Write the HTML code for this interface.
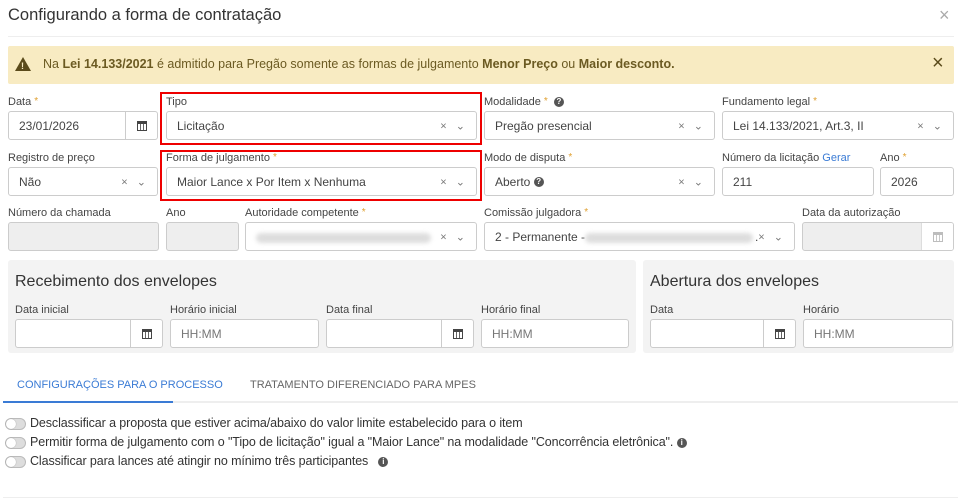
<!DOCTYPE html>
<html><head><meta charset="utf-8"><style>
*{box-sizing:border-box;margin:0;padding:0}
body{width:962px;height:501px;background:#fff;font-family:"Liberation Sans",sans-serif;color:#333;position:relative;overflow:hidden}
.a{position:absolute}
.lbl{position:absolute;font-size:11px;color:#444;white-space:nowrap}
.st{color:#e0a030;font-size:10px;vertical-align:top;margin-left:3px}
.in{position:absolute;border:1px solid #ccc;border-radius:3px;background:#fff;font-size:12px;color:#444;padding-left:10px;display:flex;align-items:center;white-space:nowrap;overflow:hidden}
.g{background:#eee}
.xv{position:absolute;right:8px;top:50%;transform:translateY(-50%);font-size:11px;color:#777;letter-spacing:3px}
.cal{position:absolute;right:0;top:0;bottom:0;width:32px;border-left:1px solid #ccc;display:flex;align-items:center;justify-content:center}
.ci{width:10px;height:10px;border:1.5px solid #444;border-top-width:3px;background:repeating-linear-gradient(90deg,#fff 0 2px,#666 2px 3px)}
.red{position:absolute;border:2px solid #e00}
.blur{position:absolute;height:10px;background:#ddd;border-radius:5px;filter:blur(2px)}
.tg{position:absolute;left:5px;width:21px;height:12px;border-radius:6px;background:#ddd;border:1px solid #bbb}
.tg:after{content:"";position:absolute;left:0;top:0;width:10px;height:10px;border-radius:50%;background:#fff;box-shadow:0 0 1px #888}
.tt{position:absolute;left:30px;font-size:12.5px;color:#333;white-space:nowrap;letter-spacing:-0.1px}
.info{display:inline-block;width:10px;height:10px;border-radius:50%;background:#555;color:#fff;font-size:8px;text-align:center;line-height:10px;font-weight:bold;vertical-align:middle}
</style></head><body>
<div class="a" style="left:8px;top:6px;font-size:16.5px;color:#333">Configurando a forma de contratação</div>
<div class="a" style="left:939px;top:5px;font-size:18px;color:#aaa">×</div>
<div class="a" style="left:8px;top:36px;width:946px;height:1px;background:#eee"></div>
<div class="a" style="left:8px;top:46px;width:946px;height:38px;background:#f8ebc2;border-radius:2px"></div>
<div class="a" style="left:15px;top:57px;width:0;height:0;border-left:8px solid transparent;border-right:8px solid transparent;border-bottom:14px solid #5a4a1a"></div>
<div class="a" style="left:21px;top:61px;font-size:9px;color:#f8ebc2;font-weight:bold">!</div>
<div class="a" style="left:43px;top:57px;font-size:12.5px;color:#6b5a22">Na <b>Lei 14.133/2021</b> é admitido para Pregão somente as formas de julgamento <b>Menor Preço</b> ou <b>Maior desconto.</b></div>
<div class="a" style="left:932px;top:52px;font-size:20px;color:#5a4a1a">×</div>

<div class="lbl" style="left:8px;top:96px">Data<span class="st">*</span></div>
<div class="in" style="left:8px;top:111px;width:150px;height:29px">23/01/2026<div class="cal"><div class="ci"></div></div></div>
<div class="red" style="left:160px;top:92px;width:322px;height:53px"></div>
<div class="lbl" style="left:166px;top:96px">Tipo</div>
<div class="in" style="left:166px;top:111px;width:311px;height:29px">Licitação<span class="xv">× ⌄</span></div>
<div class="lbl" style="left:484px;top:96px">Modalidade<span class="st">*</span> &nbsp;<span class="info">?</span></div>
<div class="in" style="left:484px;top:111px;width:231px;height:29px">Pregão presencial<span class="xv">× ⌄</span></div>
<div class="lbl" style="left:722px;top:96px">Fundamento legal<span class="st">*</span></div>
<div class="in" style="left:722px;top:111px;width:232px;height:29px">Lei 14.133/2021, Art.3, II<span class="xv">× ⌄</span></div>

<div class="lbl" style="left:8px;top:152px">Registro de preço</div>
<div class="in" style="left:8px;top:167px;width:150px;height:29px">Não<span class="xv">× ⌄</span></div>
<div class="red" style="left:160px;top:150px;width:322px;height:51px"></div>
<div class="lbl" style="left:166px;top:152px">Forma de julgamento<span class="st">*</span></div>
<div class="in" style="left:166px;top:167px;width:311px;height:29px">Maior Lance x Por Item x Nenhuma<span class="xv">× ⌄</span></div>
<div class="lbl" style="left:484px;top:152px">Modo de disputa<span class="st">*</span></div>
<div class="in" style="left:484px;top:167px;width:231px;height:29px">Aberto&nbsp;<span class="info">?</span><span class="xv">× ⌄</span></div>
<div class="lbl" style="left:722px;top:152px">Número da licitação <span style="color:#3a7bd5">Gerar</span></div>
<div class="lbl" style="left:880px;top:152px">Ano<span class="st">*</span></div>
<div class="in" style="left:722px;top:167px;width:152px;height:29px">211</div>
<div class="in" style="left:880px;top:167px;width:74px;height:29px">2026</div>

<div class="lbl" style="left:8px;top:207px">Número da chamada</div>
<div class="in g" style="left:8px;top:222px;width:151px;height:29px"></div>
<div class="lbl" style="left:166px;top:207px">Ano</div>
<div class="in g" style="left:166px;top:222px;width:73px;height:29px"></div>
<div class="lbl" style="left:245px;top:207px">Autoridade competente<span class="st">*</span></div>
<div class="in" style="left:245px;top:222px;width:232px;height:29px"><div class="blur" style="left:10px;top:10px;width:175px"></div><span class="xv">× ⌄</span></div>
<div class="lbl" style="left:484px;top:207px">Comissão julgadora<span class="st">*</span></div>
<div class="in" style="left:484px;top:222px;width:311px;height:29px">2 - Permanente -<div class="blur" style="left:100px;top:10px;width:168px"></div><span style="position:absolute;left:270px">.</span><span class="xv">× ⌄</span></div>
<div class="lbl" style="left:802px;top:207px">Data da autorização</div>
<div class="in g" style="left:802px;top:222px;width:152px;height:29px"><div class="cal" style="background:#fff;border-left-color:#ddd"><div class="ci" style="opacity:.35"></div></div></div>

<div class="a" style="left:8px;top:260px;width:628px;height:93px;background:#f3f3f3;border-radius:3px"></div>
<div class="a" style="left:15px;top:273px;font-size:16px;color:#333">Recebimento dos envelopes</div>
<div class="lbl" style="left:15px;top:304px">Data inicial</div>
<div class="lbl" style="left:170px;top:304px">Horário inicial</div>
<div class="lbl" style="left:326px;top:304px">Data final</div>
<div class="lbl" style="left:481px;top:304px">Horário final</div>
<div class="in" style="left:15px;top:319px;width:148px;height:29px"><div class="cal"><div class="ci"></div></div></div>
<div class="in" style="left:170px;top:319px;width:149px;height:29px;color:#777">HH:MM</div>
<div class="in" style="left:326px;top:319px;width:148px;height:29px"><div class="cal"><div class="ci"></div></div></div>
<div class="in" style="left:481px;top:319px;width:148px;height:29px;color:#777">HH:MM</div>

<div class="a" style="left:643px;top:260px;width:311px;height:93px;background:#f3f3f3;border-radius:3px"></div>
<div class="a" style="left:650px;top:273px;font-size:16px;color:#333">Abertura dos envelopes</div>
<div class="lbl" style="left:650px;top:304px">Data</div>
<div class="lbl" style="left:803px;top:304px">Horário</div>
<div class="in" style="left:650px;top:319px;width:146px;height:29px"><div class="cal"><div class="ci"></div></div></div>
<div class="in" style="left:803px;top:319px;width:150px;height:29px;color:#777">HH:MM</div>

<div class="a" style="left:17px;top:379px;font-size:11px;color:#3a7bd5">CONFIGURAÇÕES PARA O PROCESSO</div>
<div class="a" style="left:250px;top:379px;font-size:11px;color:#666">TRATAMENTO DIFERENCIADO PARA MPES</div>
<div class="a" style="left:3px;top:401px;width:955px;height:2px;background:#eee"></div>
<div class="a" style="left:3px;top:401px;width:170px;height:2px;background:#3a7bd5"></div>

<div class="tg" style="top:418px"></div><div class="tt" style="top:416px">Desclassificar a proposta que estiver acima/abaixo do valor limite estabelecido para o item</div>
<div class="tg" style="top:437px"></div><div class="tt" style="top:435px">Permitir forma de julgamento com o "Tipo de licitação" igual a "Maior Lance" na modalidade "Concorrência eletrônica". <span class="info">i</span></div>
<div class="tg" style="top:456px"></div><div class="tt" style="top:454px">Classificar para lances até atingir no mínimo três participantes &nbsp;&nbsp;<span class="info">i</span></div>
<div class="a" style="left:3px;top:497px;width:955px;height:1px;background:#eee"></div>
</body></html>
